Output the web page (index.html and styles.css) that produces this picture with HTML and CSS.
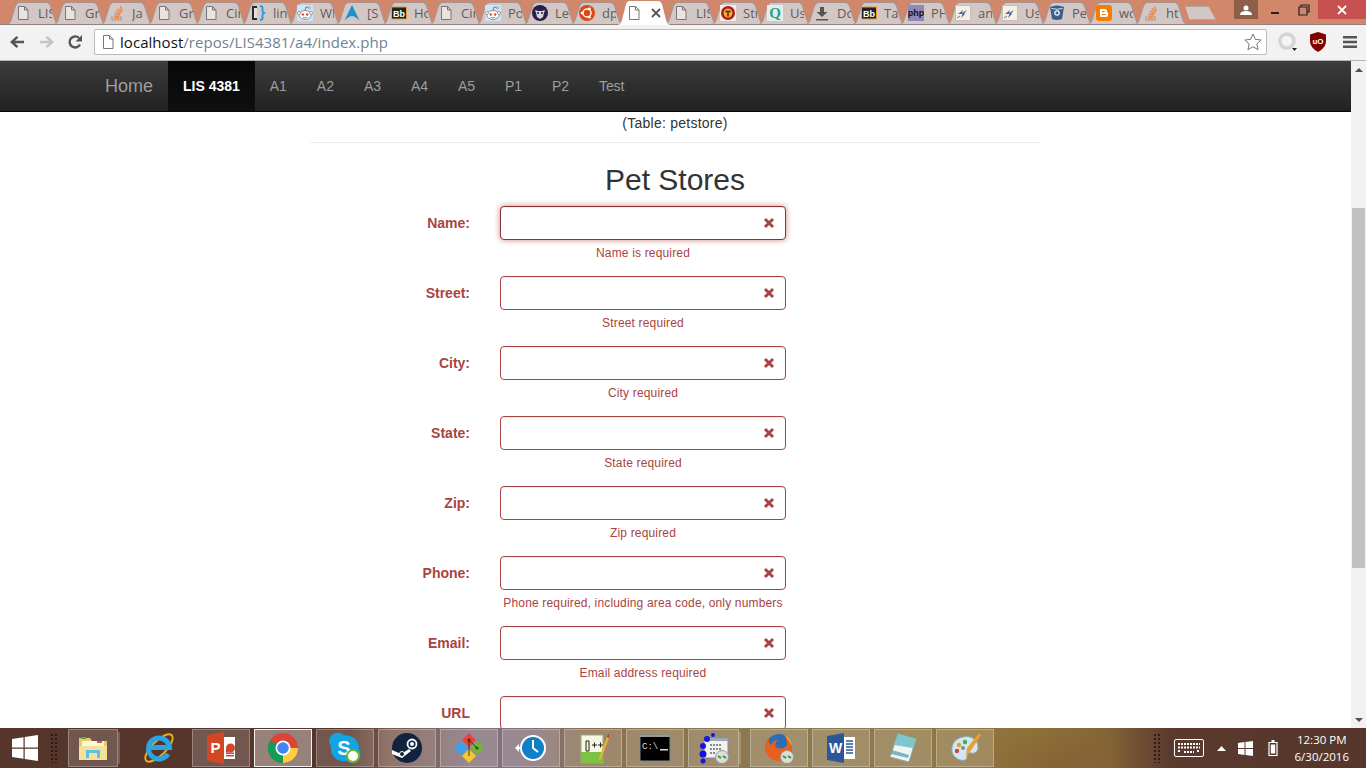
FILE: index.html
```html
<!DOCTYPE html>
<html>
<head lang="en">
    <meta charset="UTF-8">
    <title>Pet Stores</title>
    <link rel="stylesheet" href="styles.css">
</head>
<body>
<svg class="defs" width="0" height="0">
    <symbol id="doc" viewBox="0 0 16 16"><path d="M3.5 1.5h6l3.500 3.500v9.500h-9.500z M9.500 1.500v3.500h3.500" fill="#fff" fill-opacity=".5" stroke="#777" stroke-width="1"/></symbol>
    <symbol id="so" viewBox="0 0 16 16"><path d="M3 11v4h9v-4" fill="none" stroke="#a89a90" stroke-width="1.200"/><path d="M5 13h5.500M5 10.800l5.500.6M5.600 8.300l5.300 1.500M6.800 5.800l4.800 2.800M8.800 3.500l3.800 3.900M11.300 1.500l2 4.800" fill="none" stroke="#ef8236" stroke-width="1.300"/></symbol>
    <symbol id="snoo" viewBox="0 0 16 16"><path d="M0 0h16v16H0z" fill="#cee3f8"/><ellipse cx="8" cy="10" rx="6" ry="4.500" fill="#fff" stroke="#555" stroke-width=".6"/><circle cx="2" cy="8" r="1.500" fill="#fff" stroke="#555" stroke-width=".5"/><circle cx="14" cy="8" r="1.500" fill="#fff" stroke="#555" stroke-width=".5"/><circle cx="5.800" cy="9.500" r="1.200" fill="#e8451e"/><circle cx="10.200" cy="9.500" r="1.200" fill="#e8451e"/><path d="M8 5.500l1-3.500 3 .7" fill="none" stroke="#555" stroke-width=".7"/><circle cx="12.500" cy="2.800" r="1.100" fill="#fff" stroke="#555" stroke-width=".5"/><path d="M5.800 12.300q2.200 1.300 4.400 0" fill="none" stroke="#555" stroke-width=".7"/></symbol>
    <symbol id="bb" viewBox="0 0 16 16"><rect x=".5" y="2" width="15" height="12" rx="1" fill="#222" stroke="#e8a030"/><text x="8" y="11.500" font-family="Liberation Sans" font-size="9" font-weight="700" fill="#fff" text-anchor="middle">Bb</text></symbol>
    <symbol id="spark" viewBox="0 0 16 16"><rect x=".5" y=".5" width="15" height="15" fill="#f8efe6" stroke="#c9c0b8"/><path d="M3 9l5-4-1 3 5-3-3 4 1.500-.5L6 13l1.500-4z" fill="#3f6f9f"/><path d="M2 13l3-2" stroke="#777" stroke-width="1"/></symbol>
</svg>

<div class="tabstrip">
    <div class="tab"><svg class="fav"><use href="#doc"/></svg><span class="tab-title">LIS</span></div>
    <div class="tab"><svg class="fav"><use href="#doc"/></svg><span class="tab-title">Gr</span></div>
    <div class="tab"><svg class="fav"><use href="#so"/></svg><span class="tab-title">Ja</span></div>
    <div class="tab"><svg class="fav"><use href="#doc"/></svg><span class="tab-title">Gr</span></div>
    <div class="tab"><svg class="fav"><use href="#doc"/></svg><span class="tab-title">Cir</span></div>
    <div class="tab"><svg class="fav" viewBox="0 0 16 16"><path d="M2 1h5v14H2z" fill="#2b2b2b"/><path d="M4 3h3v10H4z" fill="#e6e0dc"/><path d="M10 1q3 0 2.500 3t1.500 4q-2 1-1.500 4T10 15" fill="none" stroke="#2e9fd8" stroke-width="2"/></svg><span class="tab-title">lin</span></div>
    <div class="tab"><svg class="fav"><use href="#snoo"/></svg><span class="tab-title">WI</span></div>
    <div class="tab"><svg class="fav" viewBox="0 0 16 16"><path d="M8 0L15.500 15.500Q11 11 8 11T.5 15.500z" fill="#1793d1"/></svg><span class="tab-title">[S</span></div>
    <div class="tab"><svg class="fav"><use href="#bb"/></svg><span class="tab-title">Ho</span></div>
    <div class="tab"><svg class="fav"><use href="#doc"/></svg><span class="tab-title">Cir</span></div>
    <div class="tab"><svg class="fav"><use href="#snoo"/></svg><span class="tab-title">Po</span></div>
    <div class="tab"><svg class="fav" viewBox="0 0 16 16"><circle cx="8" cy="8" r="8" fill="#2a1f4a"/><path d="M3 5l3 1h4l3-1-1 3-1 4-3 2-3-2-1-4z" fill="#d8d4e0"/><path d="M5 8h2M9 8h2" stroke="#2a1f4a" stroke-width="1.400"/></svg><span class="tab-title">Le</span></div>
    <div class="tab"><svg class="fav" viewBox="0 0 16 16"><circle cx="8" cy="8" r="8" fill="#dd4814"/><circle cx="8" cy="8" r="4" fill="none" stroke="#fff" stroke-width="1.500"/><circle cx="3" cy="8" r="1.300" fill="#fff"/><circle cx="10.500" cy="3.700" r="1.300" fill="#fff"/><circle cx="10.500" cy="12.300" r="1.300" fill="#fff"/></svg><span class="tab-title">dp</span></div>
    <div class="tab tab-active"><svg class="fav"><use href="#doc"/></svg><svg class="tab-close" viewBox="0 0 10 10"><path d="M1 1l8 8M9 1l-8 8" stroke="#555" stroke-width="1.800"/></svg></div>
    <div class="tab"><svg class="fav"><use href="#doc"/></svg><span class="tab-title">LIS</span></div>
    <div class="tab"><svg class="fav" viewBox="0 0 16 16"><path d="M0 0h16v16H0z" fill="#f4ece0"/><circle cx="8" cy="8" r="7" fill="#b3162a"/><circle cx="8" cy="8" r="4.500" fill="#e6b422"/><path d="M5.500 6.500h5M8 6.500v5" stroke="#7a0f1c" stroke-width="1.500"/></svg><span class="tab-title">Stu</span></div>
    <div class="tab"><svg class="fav" viewBox="0 0 16 16"><path d="M0 0h16v16H0z" fill="#e4eee9"/><text x="8" y="13" font-family="Liberation Serif" font-size="15" font-weight="700" fill="#2f9a8c" text-anchor="middle">Q</text></svg><span class="tab-title">Us</span></div>
    <div class="tab"><svg class="fav" viewBox="0 0 16 16"><path d="M6 2h4v5h3.500L8 12 2.500 7H6zM2 14h12v1.500H2z" fill="#555"/></svg><span class="tab-title">Do</span></div>
    <div class="tab"><svg class="fav"><use href="#bb"/></svg><span class="tab-title">Ta</span></div>
    <div class="tab"><svg class="fav" viewBox="0 0 16 16"><path d="M0 0h16v16H0z" fill="#8f88b8"/><text x="8" y="11" font-family="Liberation Sans" font-size="9" font-weight="700" fill="#111" text-anchor="middle">php</text></svg><span class="tab-title">PH</span></div>
    <div class="tab"><svg class="fav"><use href="#spark"/></svg><span class="tab-title">an</span></div>
    <div class="tab"><svg class="fav"><use href="#spark"/></svg><span class="tab-title">Us</span></div>
    <div class="tab"><svg class="fav" viewBox="0 0 16 16"><path d="M1 2q7-3 14 0l-2 12q-5 2-10 0z" fill="#3b5f8a"/><circle cx="8" cy="8" r="2.200" fill="none" stroke="#fff" stroke-width="1.200"/><path d="M2.500 3.500q5.500 1.500 11 0" stroke="#fff" stroke-width=".8" fill="none"/></svg><span class="tab-title">Pe</span></div>
    <div class="tab"><svg class="fav" viewBox="0 0 16 16"><rect width="16" height="16" rx="3" fill="#f57d00"/><path d="M5 4h4q2 0 2 2v1q1 0 1 1v2q0 2-2 2H5q-1 0-1-1V5q0-1 1-1z" fill="#fff"/><path d="M6 6.500h2.500M6 9.500h4" stroke="#f57d00" stroke-width="1.200"/></svg><span class="tab-title">wo</span></div>
    <div class="tab"><svg class="fav"><use href="#so"/></svg><span class="tab-title">ht</span></div>
    <div class="tab-new"></div>
    <div class="win-controls">
        <div class="win-user"><svg width="12" height="10" viewBox="0 0 12 10"><circle cx="6" cy="3" r="2.500" fill="#fff"/><path d="M0 10q0-4 6-4t6 4z" fill="#fff"/></svg></div>
        <div class="win-btn"><svg width="10" height="10" viewBox="0 0 10 10"><path d="M1 7h8v2H1z" fill="#222"/></svg></div>
        <div class="win-btn"><svg width="12" height="12" viewBox="0 0 12 12"><path d="M3 3V1h8v7H9M1 3h8v8H1z" fill="none" stroke="#222" stroke-width="1.200"/></svg></div>
        <div class="win-close"><svg width="10" height="10" viewBox="0 0 10 10"><path d="M1 1l8 8M9 1l-8 8" stroke="#fff" stroke-width="1.800"/></svg></div>
    </div>
</div>

<div class="toolbar">
    <svg class="tool-back" width="16" height="16" viewBox="0 0 16 16"><path d="M1 8l6.500-6 1.800 1.800L6 6.700h9v2.600H6l3.300 2.900L7.500 14z" fill="#555"/></svg>
    <svg class="tool-forward" width="16" height="16" viewBox="0 0 16 16"><path d="M15 8L8.500 2 6.700 3.800 10 6.700H1v2.600h9l-3.300 2.900L8.500 14z" fill="#c4c4c4"/></svg>
    <svg class="tool-reload" width="16" height="16" viewBox="0 0 16 16"><path d="M13 10.500A5.500 5.500 0 1 1 12 4" fill="none" stroke="#555" stroke-width="2.400"/><path d="M15 1v6.500H8.500z" fill="#555"/></svg>
    <div class="omnibox">
        <svg class="omni-doc"><use href="#doc"/></svg>
        <span class="url"><span class="url-host">localhost</span>/repos/LIS4381/a4/index.php</span>
        <svg class="omni-star" width="18" height="18" viewBox="0 0 18 18"><path d="M9 1l2.400 5.400 5.800.6-4.400 3.900 1.300 5.800L9 13.700l-5.100 3 1.300-5.800L.8 7l5.800-.6z" fill="#fff" stroke="#777" stroke-width="1"/></svg>
    </div>
    <svg class="tool-ext" width="20" height="20" viewBox="0 0 20 20"><circle cx="9" cy="9" r="7" fill="none" stroke="#d4d4d4" stroke-width="3.500"/><circle cx="8" cy="9" r="4.500" fill="#f4f4f4"/><path d="M14 16h5l-2.500 3z" fill="#222"/></svg>
    <svg class="tool-ublock" width="18" height="20" viewBox="0 0 18 20"><path d="M9 0l8 2.500v7q0 6-8 10.500Q1 15.500 1 9.500v-7z" fill="#800000"/><text x="9" y="12" font-family="Liberation Sans" font-size="8" font-weight="700" fill="#fff" text-anchor="middle">uO</text></svg>
    <svg class="tool-menu" width="14" height="14" viewBox="0 0 14 14"><path d="M0 1h14v2.400H0zM0 5.800h14v2.400H0zM0 10.600h14V13H0z" fill="#555"/></svg>
</div>

<div class="viewport">
    <div class="page">
        <div class="navbar">
            <a class="brand">Home</a>
            <a class="nav-link nav-active">LIS 4381</a>
            <a class="nav-link">A1</a>
            <a class="nav-link">A2</a>
            <a class="nav-link">A3</a>
            <a class="nav-link">A4</a>
            <a class="nav-link">A5</a>
            <a class="nav-link">P1</a>
            <a class="nav-link">P2</a>
            <a class="nav-link">Test</a>
        </div>
        <div class="container">
            <p class="caption">(Table: petstore)</p>
            <hr class="rule">
            <h2 class="title">Pet Stores</h2>

            <div class="field">
                <label class="field-label">Name:</label>
                <div class="field-col">
                    <div class="input-wrap">
                        <input class="input input-focus" type="text">
                        <svg class="x-icon" viewBox="0 0 12 12"><path d="M2 2l8 8M10 2l-8 8" stroke="#a94442" stroke-width="3"/></svg>
                    </div>
                    <small class="help">Name is required</small>
                </div>
            </div>
            <div class="field">
                <label class="field-label">Street:</label>
                <div class="field-col">
                    <div class="input-wrap">
                        <input class="input" type="text">
                        <svg class="x-icon" viewBox="0 0 12 12"><path d="M2 2l8 8M10 2l-8 8" stroke="#a94442" stroke-width="3"/></svg>
                    </div>
                    <small class="help">Street required</small>
                </div>
            </div>
            <div class="field">
                <label class="field-label">City:</label>
                <div class="field-col">
                    <div class="input-wrap">
                        <input class="input" type="text">
                        <svg class="x-icon" viewBox="0 0 12 12"><path d="M2 2l8 8M10 2l-8 8" stroke="#a94442" stroke-width="3"/></svg>
                    </div>
                    <small class="help">City required</small>
                </div>
            </div>
            <div class="field">
                <label class="field-label">State:</label>
                <div class="field-col">
                    <div class="input-wrap">
                        <input class="input" type="text">
                        <svg class="x-icon" viewBox="0 0 12 12"><path d="M2 2l8 8M10 2l-8 8" stroke="#a94442" stroke-width="3"/></svg>
                    </div>
                    <small class="help">State required</small>
                </div>
            </div>
            <div class="field">
                <label class="field-label">Zip:</label>
                <div class="field-col">
                    <div class="input-wrap">
                        <input class="input" type="text">
                        <svg class="x-icon" viewBox="0 0 12 12"><path d="M2 2l8 8M10 2l-8 8" stroke="#a94442" stroke-width="3"/></svg>
                    </div>
                    <small class="help">Zip required</small>
                </div>
            </div>
            <div class="field">
                <label class="field-label">Phone:</label>
                <div class="field-col">
                    <div class="input-wrap">
                        <input class="input" type="text">
                        <svg class="x-icon" viewBox="0 0 12 12"><path d="M2 2l8 8M10 2l-8 8" stroke="#a94442" stroke-width="3"/></svg>
                    </div>
                    <small class="help">Phone required, including area code, only numbers</small>
                </div>
            </div>
            <div class="field">
                <label class="field-label">Email:</label>
                <div class="field-col">
                    <div class="input-wrap">
                        <input class="input" type="text">
                        <svg class="x-icon" viewBox="0 0 12 12"><path d="M2 2l8 8M10 2l-8 8" stroke="#a94442" stroke-width="3"/></svg>
                    </div>
                    <small class="help">Email address required</small>
                </div>
            </div>
            <div class="field">
                <label class="field-label">URL</label>
                <div class="field-col">
                    <div class="input-wrap">
                        <input class="input" type="text">
                        <svg class="x-icon" viewBox="0 0 12 12"><path d="M2 2l8 8M10 2l-8 8" stroke="#a94442" stroke-width="3"/></svg>
                    </div>
                </div>
            </div>
        </div>
    </div>
    <div class="scrollbar">
        <div class="scroll-up"></div>
        <div class="scroll-track"><div class="scroll-thumb"></div></div>
        <div class="scroll-down"></div>
    </div>
</div>

<div class="taskbar">
    <svg class="start" width="26" height="26" viewBox="0 0 26 26"><path d="M0 4l11.500-1.700V12.500H0zM12.700 2.100L26 0v12.500H12.700zM0 13.700h11.500v10L0 22zM12.700 13.700H26V26l-13.300-2z" fill="#fff"/></svg>
    <div class="grip"></div>
    <div class="task task-multi"><svg class="task-icon" viewBox="0 0 32 32"><path d="M2 6h11l2 3h15v19H2z" fill="#e9c96a"/><path d="M5 9h22v5H5z" fill="#fff7d8"/><path d="M4 5h5v2H4z" fill="#39b54a"/><path d="M20 9h5v2h-5z" fill="#d9534f"/><path d="M2 14h28v14H2z" fill="#f6e19a"/><path d="M9 18h14v8h-3v-5h-8v5H9z" fill="#5cc0e8"/></svg></div>
    <div class="task task-plain"><svg class="task-icon" viewBox="0 0 32 32"><ellipse cx="16" cy="16" rx="18" ry="7" transform="rotate(-45 16 16)" fill="none" stroke="#e6ad1c" stroke-width="2"/><path d="M25 22A10.500 10.500 0 1 1 26.500 15.500H7.500" fill="none" stroke="#2aa4e4" stroke-width="5"/></svg></div>
    <div class="task"><svg class="task-icon" viewBox="0 0 32 32"><path d="M2 3l17-3v32L2 29z" fill="#d24726"/><path d="M19 5h11v22H19z" fill="#fff"/><path d="M21 16a4.500 4.500 0 1 1 4.500 4.500H21z" fill="#d24726"/><path d="M21 23h8v1.500h-8zM21 20.500h8V22h-8z" fill="#d24726"/><text x="10.500" y="21" font-family="Liberation Sans" font-size="15" font-weight="700" fill="#fff" text-anchor="middle">P</text></svg></div>
    <div class="task task-on"><svg class="task-icon" viewBox="0 0 32 32"><circle cx="16" cy="16" r="15" fill="#db4437"/><path d="M16 16L3 23.500A15 15 0 0 0 16 31z" fill="#0f9d58"/><path d="M3 23.500A15 15 0 0 1 3 8.500L16 16z" fill="#0f9d58"/><path d="M16 16h15a15 15 0 0 1-15 15z" fill="#ffcd40"/><circle cx="16" cy="16" r="7.500" fill="#fff"/><circle cx="16" cy="16" r="5.800" fill="#4285f4"/></svg></div>
    <div class="task"><svg class="task-icon" viewBox="0 0 32 32"><path d="M8 1a7 7 0 0 1 7 2.500A13 13 0 0 1 30 18a7.500 7.500 0 0 1-6 12 8 8 0 0 1-7-1A13 13 0 0 1 2 14 8 8 0 0 1 8 1z" fill="#12a5e6"/><text x="15" y="23" font-family="Liberation Sans" font-size="20" font-weight="700" fill="#fff" text-anchor="middle">S</text><circle cx="24" cy="24" r="6" fill="#fff" stroke="#6cb82c" stroke-width="2"/></svg></div>
    <div class="task"><svg class="task-icon" viewBox="0 0 32 32"><circle cx="16" cy="16" r="15" fill="#10233f"/><circle cx="21" cy="12" r="4.500" fill="none" stroke="#fff" stroke-width="1.800"/><circle cx="21" cy="12" r="2" fill="#fff"/><path d="M1 18l9 4 8-5 2 2-9 7-10-4z" fill="#fff"/><circle cx="11" cy="22" r="2.500" fill="#10233f" stroke="#fff"/></svg></div>
    <div class="task"><svg class="task-icon" viewBox="0 0 32 32"><path d="M16 1l7 7-7 7-7-7z" fill="#e9453a"/><path d="M24 9l7 7-7 7-7-7z" fill="#73b53a"/><path d="M16 17l7 7-7 7-7-7z" fill="#f4c830"/><path d="M8 9l7 7-7 7-7-7z" fill="#3f9fe8"/><circle cx="16" cy="8" r="1.600" fill="#6b1d16"/><circle cx="24" cy="16" r="1.600" fill="#2e5214"/><path d="M16 8l8 8M16 8v16" stroke="#333" stroke-width="1"/></svg></div>
    <div class="task"><svg class="task-icon" viewBox="0 0 32 32"><circle cx="18" cy="16" r="13" fill="#fff"/><circle cx="18" cy="16" r="11" fill="#0f7fc6"/><path d="M18 8v8l5 4" fill="none" stroke="#fff" stroke-width="2"/><path d="M0 16l4-4v8z" fill="#fff"/><path d="M3 16h3" stroke="#fff" stroke-width="2"/></svg></div>
    <div class="task"><svg class="task-icon" viewBox="0 0 32 32"><path d="M4 3h22v28H4z" fill="#f4f6e0" stroke="#9aa888"/><path d="M4 20h22v11H4z" fill="#7cc243"/><path d="M9 9h3v10H9z" fill="none" stroke="#222"/><path d="M15 13h5M17.500 10.500v5M21 13h5M23.500 10.500v5" stroke="#222"/><path d="M22 26L30 5l2 1-8 21-3 2z" fill="#f0b030"/><path d="M30 5l1-3 2 1-1 3z" fill="#c0392b"/></svg></div>
    <div class="task"><svg class="task-icon" viewBox="0 0 32 32"><rect x="1" y="3" width="30" height="26" fill="#000" stroke="#888"/><path d="M1 3h30v2H1z" fill="#999"/><text x="3" y="17" font-family="Liberation Mono" font-size="9" fill="#ddd">C:\</text><path d="M21 17h8v1.500h-8z" fill="#ddd"/></svg></div>
    <div class="task task-multi task-net"><svg class="task-icon" viewBox="0 0 32 32"><path d="M6 6h24v20H6z" fill="#f2f2f2" stroke="#8a8a8a"/><path d="M6 6h24v3H6z" fill="#9ab"/><path d="M12 13h12M12 17h12M12 21h6" stroke="#222" stroke-dasharray="2 1"/><circle cx="5" cy="14" r="3" fill="#1515e0"/><circle cx="5" cy="22" r="3.500" fill="#1515e0"/><circle cx="9" cy="7" r="3" fill="#1515e0"/><circle cx="15" cy="3" r="2" fill="#1515e0"/><circle cx="5" cy="29" r="2.500" fill="#1515e0"/><circle cx="24" cy="25" r="6.500" fill="#ddd" stroke="#999"/><path d="M20 24l3 2M28 26l-3-2" stroke="#2aa02a" stroke-width="2"/></svg></div>
    <div class="task"><svg class="task-icon" viewBox="0 0 32 32"><circle cx="16" cy="15" r="13" fill="#2a6fb5"/><path d="M21 3Q29 8 29 16A13.500 13.500 0 1 1 6 6Q5 11 8 13 10 8 15 8 11 11 13 15 20 19 24 13 24 7 21 3z" fill="#e8601c"/><path d="M22 3q6 4 7 11l-3-5z" fill="#f8c22e"/><circle cx="24" cy="25" r="6.500" fill="#ddd" stroke="#999"/><path d="M20 24l3 2M28 26l-3-2" stroke="#2aa02a" stroke-width="2"/></svg></div>
    <div class="task"><svg class="task-icon" viewBox="0 0 32 32"><path d="M2 4l17-3v30L2 28z" fill="#2b579a"/><path d="M19 5h11v22H19z" fill="#fff"/><path d="M21 9h7M21 12h7M21 15h7M21 18h7M21 21h7" stroke="#2b579a" stroke-width="1.500"/><text x="10.500" y="21" font-family="Liberation Sans" font-size="14" font-weight="700" fill="#fff" text-anchor="middle">W</text></svg></div>
    <div class="task"><svg class="task-icon" viewBox="0 0 32 32"><path d="M11 2l18 5-7 23L3 25z" fill="#eef5f5" stroke="#8aa"/><path d="M11 2l18 5-3 9-19-3z" fill="#7fc6cc"/><path d="M5 18l17 5-1 3-17-4z" fill="#4f9aa4" opacity=".7"/></svg></div>
    <div class="task"><svg class="task-icon" viewBox="0 0 32 32"><path d="M14 5c8-2 15 3 15 10 0 6-5 7-7 6-3-1-4 1-4 4s-3 4-7 3C5 26 2 21 3 15 4 10 8 6 14 5z" fill="#cfe8f2" stroke="#8ab"/><circle cx="10" cy="13" r="2.200" fill="#e8a020"/><circle cx="16" cy="10" r="2.200" fill="#4aa84a"/><circle cx="8" cy="19" r="2.200" fill="#d9403a"/><circle cx="14" cy="16" r="2" fill="#888"/><path d="M30 1l2 2-9 14-6 8 1-9z" fill="#e8a030"/></svg></div>
    <div class="tray">
        <div class="grip"></div>
        <svg class="tray-kbd" width="30" height="18" viewBox="0 0 30 18"><rect x=".5" y=".5" width="29" height="17" rx="1.500" fill="none" stroke="#fff"/><path d="M4 5h22M4 8.500h22M4 12h3M10 13h10M23 12h3" stroke="#fff" stroke-width="2" stroke-dasharray="2 1"/></svg>
        <svg class="tray-caret" width="9" height="5" viewBox="0 0 9 5"><path d="M4.500 0L9 5H0z" fill="#fff"/></svg>
        <svg class="tray-flag" width="15" height="15" viewBox="0 0 15 15"><path d="M0 2l6.500-1v6H0zM7.500 1L15 0v7H7.500zM0 8h6.500v6L0 13zM7.500 8H15v7l-7.500-1z" fill="#fff"/></svg>
        <svg class="tray-batt" width="10" height="16" viewBox="0 0 10 16"><path d="M1 2.500h8v13H1z" fill="none" stroke="#fff" stroke-width="1.200"/><path d="M3.500 0h3v2h-3zM2.800 4.500h4.400v9H2.800z" fill="#fff"/></svg>
        <div class="clock"><span>12:30 PM</span><span>6/30/2016</span></div>
    </div>
</div>
</body>
</html>
```

FILE: styles.css
```css
*{
    box-sizing:border-box;
    margin:0;
    padding:0;
}
html,body{
    width:1366px;
    height:768px;
    overflow:hidden;
}
body{
    display:flex;
    flex-direction:column;
    background:#d2866a;
    font-family:"Liberation Sans",Arial,sans-serif;
    font-size:14px;
    color:#333;
}
.defs{
    display:block;
    height:0;
}

/* tabs */
.tabstrip{
    position:relative;
    z-index:1;
    display:flex;
    align-items:flex-end;
    flex:0 0 24px;
    padding-left:6px;
    background:#d2866a;
}
.tab{
    position:relative;
    display:flex;
    align-items:center;
    flex:0 0 54px;
    height:22px;
    margin-right:-7px;
    padding:0 0 0 9px;
    background:#a49694;
    clip-path:path("M0 22C3 22 4 20 5 17L9 3C10 1 11 0 13 0H41C43 0 44 1 45 3L49 17C50 20 51 22 54 22Z");
}
.tab::before{
    content:"";
    position:absolute;
    top:1px;
    left:0;
    width:54px;
    height:21px;
    background:#d3c7c5;
    clip-path:path("M2 21C4 21 5 19 6 16L10 3C11 1 12 0 14 0H40C42 0 43 1 44 3L48 16C49 19 50 21 52 21Z");
}
.tab-active{
    z-index:2;
    height:24px;
    margin-bottom:-1px;
    clip-path:path("M0 24C3 24 4 22 5 19L9 3C10 1 11 0 13 0H41C43 0 44 1 45 3L49 19C50 22 51 24 54 24Z");
}
.tab-active::before{
    top:0;
    height:24px;
    background:#fff;
    clip-path:none;
}
.fav,.tab-title,.tab-close{
    position:relative;
}
.fav{
    flex:0 0 16px;
    width:16px;
    height:16px;
}
.tab-title{
    width:14px;
    margin-left:7px;
    overflow:hidden;
    white-space:nowrap;
    font-family:"Open Sans",sans-serif;
    font-size:13px;
    color:#5f5a5a;
}
.tab-close{
    width:10px;
    height:10px;
    margin-left:9px;
}
.tab-new{
    flex:0 0 31px;
    height:14px;
    margin:0 0 4px 4px;
    background:#d3c7c5;
    border:1px solid #b5a5a2;
    clip-path:polygon(0 0,75% 0,100% 100%,15% 100%);
}
.win-controls{
    display:flex;
    align-self:flex-start;
    margin-left:18px;
}
.win-user{
    display:flex;
    align-items:center;
    justify-content:center;
    width:24px;
    height:19px;
    margin-right:2px;
    background:#8c5f48;
}
.win-btn{
    display:flex;
    align-items:center;
    justify-content:center;
    width:29px;
    height:19px;
}
.win-close{
    display:flex;
    align-items:center;
    justify-content:center;
    width:48px;
    height:19px;
    background:#c75050;
}

/* toolbar */
.toolbar{
    display:flex;
    align-items:center;
    flex:0 0 37px;
    padding:0 9px 1px 9px;
    background:#f2f2f2;
    border-top:1px solid #8f8280;
    border-bottom:1px solid #b5b5b5;
}
.tool-forward{
    margin-left:14px;
}
.tool-reload{
    margin-left:12px;
}
.omnibox{
    display:flex;
    align-items:center;
    width:1173px;
    height:26px;
    margin-left:11px;
    padding:0 4px 0 5px;
    background:#fff;
    border:1px solid #bcbcbc;
    border-radius:2px;
}
.omni-doc{
    width:16px;
    height:16px;
}
.url{
    flex:1;
    margin-left:4px;
    font-family:"Open Sans",sans-serif;
    font-size:15px;
    letter-spacing:.05px;
    color:#6f8296;
}
.url-host{
    color:#111;
}
.tool-ext{
    margin-left:11px;
}
.tool-ublock{
    margin-left:11px;
}
.tool-menu{
    margin-left:16px;
}

/* page */
.viewport{
    display:flex;
    flex:1;
    min-height:0;
}
.page{
    flex:1;
    min-width:0;
    overflow:hidden;
    background:#fff;
}
.navbar{
    display:flex;
    height:51px;
    padding-left:90px;
    background:linear-gradient(#3c3c3c,#222);
    border-bottom:1px solid #080808;
}
.brand{
    padding:0 15px;
    font-size:18px;
    line-height:50px;
    color:#9d9d9d;
}
.nav-link{
    padding:0 15px;
    font-size:14px;
    line-height:50px;
    letter-spacing:-.06px;
    color:#9d9d9d;
}
.nav-active{
    font-weight:bold;
    letter-spacing:0;
    color:#fff;
    background:linear-gradient(#080808,#0f0f0f);
}
.container{
    width:730px;
    margin-left:310px;
    padding-top:1px;
}
.caption{
    line-height:20px;
    letter-spacing:.25px;
    text-align:center;
}
.rule{
    height:1px;
    margin-top:9px;
    border:0;
    background:#eee;
}
.title{
    margin:20px 0 10px;
    font-size:30px;
    font-weight:normal;
    line-height:33px;
    text-align:center;
}
.field{
    display:flex;
    height:70px;
    color:#a94442;
}
.field-label{
    width:160px;
    margin-right:30px;
    font-weight:bold;
    line-height:34px;
    text-align:right;
}
.field-col{
    width:286px;
}
.input-wrap{
    position:relative;
}
.input{
    display:block;
    width:100%;
    height:34px;
    background:#fff;
    border:1px solid #a94442;
    border-radius:4px;
    box-shadow:inset 0 1px 1px rgba(0,0,0,.075);
}
.input-focus{
    border-color:#843534;
    box-shadow:inset 0 1px 1px rgba(0,0,0,.075),0 0 6px #ce8483;
}
.x-icon{
    position:absolute;
    top:11px;
    right:11px;
    width:12px;
    height:12px;
}
.help{
    display:block;
    margin-top:5px;
    font-size:12px;
    line-height:17px;
    letter-spacing:.16px;
    text-align:center;
}

/* scrollbar */
.scrollbar{
    display:flex;
    flex-direction:column;
    flex:0 0 15px;
    background:#f1f1f1;
}
.scroll-up,.scroll-down{
    display:flex;
    align-items:center;
    justify-content:center;
    flex:0 0 17px;
}
.scroll-up::before{
    content:"";
    border:4px solid transparent;
    border-top:0;
    border-bottom:4px solid #505050;
}
.scroll-down::before{
    content:"";
    border:4px solid transparent;
    border-bottom:0;
    border-top:4px solid #505050;
}
.scroll-track{
    flex:1;
    padding:130px 1px 0;
}
.scroll-thumb{
    height:360px;
    background:#c1c1c1;
}

/* taskbar */
.taskbar{
    display:flex;
    align-items:center;
    flex:0 0 40px;
    padding-left:12px;
    background:
        radial-gradient(ellipse 70px 40px at 1050px 36px,rgba(120,80,50,.35),transparent),
        linear-gradient(90deg,#56362b 0,#56362b 350px,#7b5a4c 390px,#84707a 470px,#85707a 530px,#8b6f4e 590px,#8e7a50 800px,#8f7238 1040px,#846436 1110px,#5a3a2d 1170px,#56362b 1366px);
}
.start{
    margin-right:12px;
}
.grip{
    flex:0 0 8px;
    height:30px;
    margin-right:10px;
    background-image:radial-gradient(circle,rgba(0,0,0,.55) 1px,transparent 1.200px);
    background-size:4px 4px;
}
.task{
    display:flex;
    align-items:center;
    justify-content:center;
    flex:0 0 58px;
    height:38px;
    margin-right:4px;
    background:rgba(255,255,255,.17);
    border:1px solid rgba(255,255,255,.28);
}
.task-on{
    background:rgba(255,255,255,.38);
    border:1px solid rgba(255,255,255,.9);
}
.task-plain{
    margin-left:3px;
    background:none;
    border:0;
}
.task-multi{
    flex:0 0 50px;
    margin-right:9px;
    box-shadow:5px 0 0 -3px rgba(255,255,255,.2);
}
.task-net{
    flex:0 0 51px;
    margin-right:11px;
}
.task-icon{
    width:32px;
    height:32px;
}
.tray{
    display:flex;
    align-items:center;
    flex:1;
    justify-content:flex-end;
    padding-right:17px;
}
.tray .grip{
    margin-right:13px;
}
.tray-caret{
    margin-left:13px;
}
.tray-flag{
    margin-left:12px;
}
.tray-batt{
    margin-left:15px;
}
.clock{
    display:flex;
    flex-direction:column;
    align-items:center;
    margin-left:17px;
    font-family:"Open Sans",sans-serif;
    font-size:11.5px;
    line-height:17px;
    color:#fff;
}
```
